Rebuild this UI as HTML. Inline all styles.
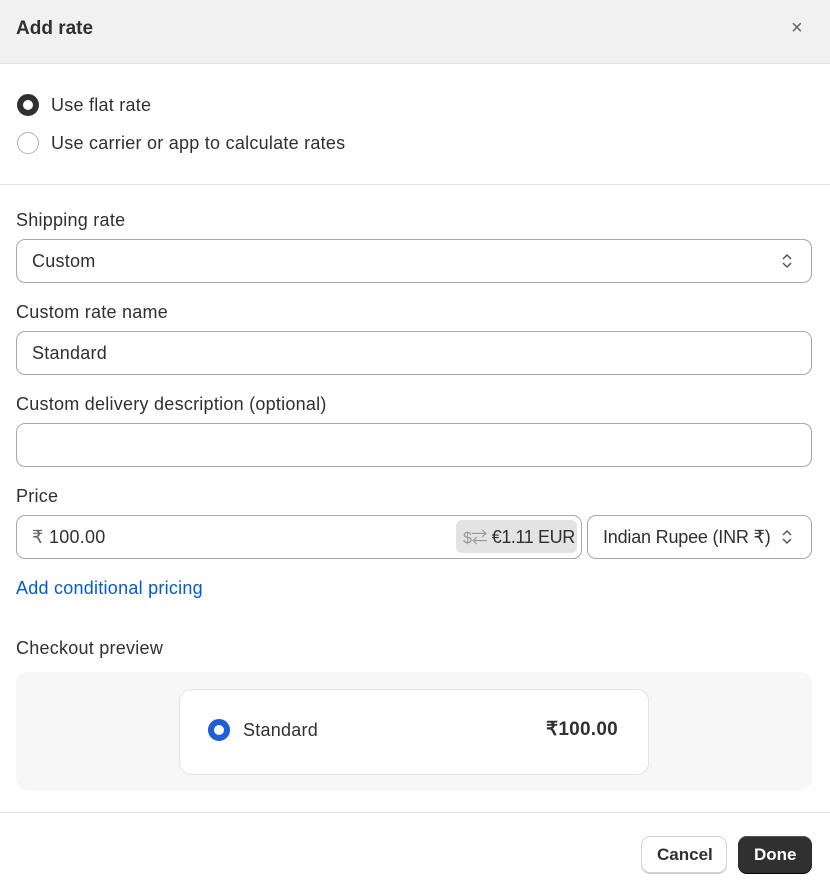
<!DOCTYPE html>
<html><head><meta charset="utf-8"><style>
*{box-sizing:border-box;margin:0;padding:0}
body{width:830px;height:885px;background:#fff;font-family:"Liberation Sans","Noto Sans CJK SC",sans-serif;color:#303030;position:relative;overflow:hidden;font-size:18px;letter-spacing:0.25px}
.a{position:absolute}
.t{position:absolute;line-height:20px;white-space:nowrap}
.box{position:absolute;border:1px solid #a8a8a8;border-radius:9px;background:#fff}
</style></head><body>
<div class="a" style="left:0;top:0;width:830px;height:64px;background:#f1f1f1;border-bottom:1px solid #e3e3e3"></div>
<div class="t" style="left:16px;top:19px;font-weight:bold;font-size:19px;color:#303030;letter-spacing:0">Add rate</div>
<div class="t" style="left:791px;top:18px;font-size:20px;color:#666">×</div>

<div class="a" style="left:17px;top:94px;width:22px;height:22px;border-radius:50%;border:6px solid #303030;background:#fff"></div>
<div class="t" style="left:51px;top:95px">Use flat rate</div>
<div class="a" style="left:17px;top:132px;width:22px;height:22px;border-radius:50%;border:1px solid #b0b0b0"></div>
<div class="t" style="left:51px;top:133px">Use carrier or app to calculate rates</div>
<div class="a" style="left:0;top:184px;width:830px;height:1px;background:#e3e3e3"></div>

<div class="t" style="left:16px;top:210px">Shipping rate</div>
<div class="box" style="left:16px;top:239px;width:796px;height:44px"></div>
<div class="t" style="left:32px;top:251px">Custom</div>
<svg class="a" style="left:780px;top:252px" width="14" height="18" viewBox="0 0 14 18"><path d="M3 7l4-4 4 4M3 11l4 4 4-4" fill="none" stroke="#555" stroke-width="1.5"/></svg>

<div class="t" style="left:16px;top:302px">Custom rate name</div>
<div class="box" style="left:16px;top:331px;width:796px;height:44px"></div>
<div class="t" style="left:32px;top:343px">Standard</div>

<div class="t" style="left:16px;top:394px">Custom delivery description (optional)</div>
<div class="box" style="left:16px;top:423px;width:796px;height:44px"></div>

<div class="t" style="left:16px;top:486px">Price</div>
<div class="box" style="left:16px;top:515px;width:566px;height:44px"></div>
<div class="t" style="left:32px;top:527px"><span style="color:#666">₹</span> 100.00</div>
<div class="a" style="left:456px;top:520px;width:121px;height:33px;background:#e3e3e3;border-radius:6px"></div>
<div class="t" style="left:463px;top:527px;letter-spacing:-0.4px"><span style="color:#999;font-size:16px">$⇄</span> €1.11 EUR</div>
<div class="box" style="left:587px;top:515px;width:225px;height:44px"></div>
<div class="t" style="left:603px;top:527px;letter-spacing:-0.2px">Indian Rupee (INR ₹)</div>
<svg class="a" style="left:780px;top:528px" width="14" height="18" viewBox="0 0 14 18"><path d="M3 7l4-4 4 4M3 11l4 4 4-4" fill="none" stroke="#555" stroke-width="1.5"/></svg>

<div class="t" style="left:16px;top:578px;color:#005bd3">Add conditional pricing</div>

<div class="t" style="left:16px;top:638px">Checkout preview</div>
<div class="a" style="left:16px;top:672px;width:796px;height:118px;background:#f7f7f7;border-radius:12px"></div>
<div class="a" style="left:179px;top:689px;width:470px;height:86px;background:#fff;border:1px solid #e3e3e3;border-radius:12px"></div>
<div class="a" style="left:208px;top:719px;width:22px;height:22px;border-radius:50%;border:6px solid #1c5fd6;background:#fff"></div>
<div class="t" style="left:243px;top:720px">Standard</div>
<div class="t" style="left:546px;top:720px;font-weight:bold;font-size:19px">₹100.00</div>

<div class="a" style="left:0;top:812px;width:830px;height:1px;background:#e3e3e3"></div>
<div class="a" style="left:641px;top:836px;width:86px;height:37px;border:1px solid #d4d4d4;border-radius:9px;background:#fff;box-shadow:0 1px 0 #ccc"></div>
<div class="t" style="left:657px;top:845px;font-weight:bold;font-size:17px;letter-spacing:0">Cancel</div>
<div class="a" style="left:738px;top:836px;width:74px;height:37px;border-radius:9px;background:#303030;box-shadow:inset 0 1px 0 #555,0 1px 0 #000"></div>
<div class="t" style="left:754px;top:845px;font-weight:bold;font-size:17px;color:#fff;letter-spacing:0">Done</div>
</body></html>
